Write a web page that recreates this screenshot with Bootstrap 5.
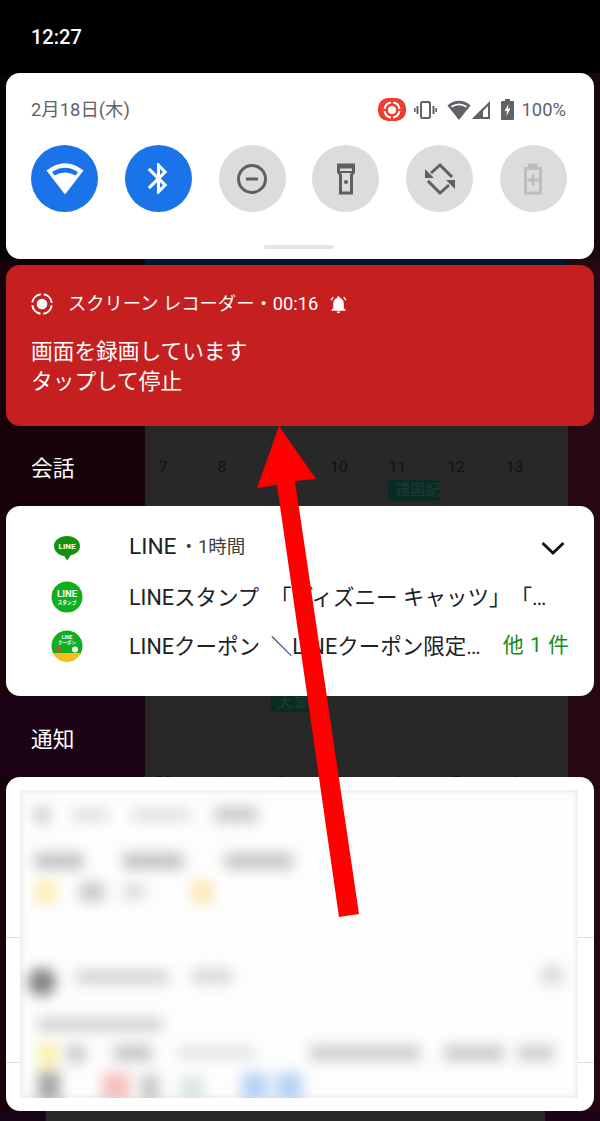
<!DOCTYPE html>
<html lang="ja">
<head>
  <meta charset="UTF-8">
  <meta name="viewport" content="width=device-width, initial-scale=1.0">
  <title>通知パネル</title>
  <link href="https://cdn.jsdelivr.net/npm/bootstrap@5.3.0/dist/css/bootstrap.min.css" rel="stylesheet">
  <style>
    html, body { height: 1121px; overflow: hidden; }
    body { background: #000; font-family: Roboto, "Noto Sans CJK JP", sans-serif; }
    .shade { position: relative; width: 600px; height: 1121px; background: #000; }
    .clock-bar { height: 73px; padding: 23px 0 0 31px; color: #fff; font-size: 20px; font-weight: 500; line-height: 28px; }
    .qs-wrap { background: linear-gradient(90deg, #080306 0 300px, #1a070c 300px); }
    .qs-panel { margin: 0 6px; height: 186px; background: #fff; border-radius: 14px; padding: 0 27px 0 25px; }
    .qs-top { height: 72px; padding-top: 2px; color: #5f6368; font-size: 18.400px; }
    .st-wrap { margin-right: 1px; }
    .rec-pill { width: 28px; height: 23px; background: #ee3e33; border-radius: 10px; margin-right: 8px; }
    .st-gap { margin-right: 10px; }
    .qs-btn { width: 67px; height: 67px; border-radius: 50%; background: #dcdcdc; }
    .qs-btn.on { background: #1a73e8; }
    .qs-handle { width: 70px; height: 4px; background: #e4e4e4; border-radius: 2px; margin: 33px auto 0; }
    .wall { background: linear-gradient(90deg, #170309 0 145px, #282828 145px 568px, #260812 568px); }
    .wall-navy { height: 6px; background: linear-gradient(90deg, #130308 0 145px, #03152a 145px 568px, #260812 568px); }
    .rec-card { margin: 0 6px; height: 161px; background: #c5201f; border-radius: 14px; color: #fff; padding: 27px 25px 0; }
    .rec-head { font-size: 18.300px; line-height: 24px; height: 24px; white-space: nowrap; }
    .rec-bell { margin-left: 10px; }
    .rec-body { font-size: 21.700px; line-height: 30px; margin-top: 21px; }
    .sect-row { height: 80px; overflow: hidden; }
    .sect-row.low { height: 81px; background: linear-gradient(90deg, #1c0316 0 145px, #282828 145px 568px, #260812 568px); }
    .sect-name { width: 103px; margin-left: 31px; color: #fff; font-size: 21.700px; line-height: 30px; padding-top: 28px; flex: none; }
    .sect-row.low .sect-name { padding-top: 29px; }
    .cal-week { width: 410px; display: grid; grid-template-columns: repeat(7, 1fr); color: #111; font-size: 15.500px; line-height: 20px; text-align: center; padding-top: 31px; align-content: start; }
    .cal-chip { grid-column: 5 / span 2; width: 52px; height: 21px; margin: 3px 0 0 20px; background: #0a2a24; color: #1d3b35; border-radius: 3px; font-size: 15px; line-height: 21px; white-space: nowrap; text-align: left; padding-left: 7px; }
    .cal-low { width: 410px; flex: none; display: flex; flex-direction: column; }
    .cal-chip-low { width: 40px; height: 16px; margin-left: 137px; background: #0a2a24; color: #1d3b35; border-radius: 0 0 3px 3px; font-size: 16px; line-height: 12px; white-space: nowrap; padding-left: 6px; }
    .cal-nums { margin-top: auto; display: grid; grid-template-columns: repeat(7, 1fr); color: #111; font-size: 15.500px; line-height: 18px; text-align: center; margin-bottom: -14px; }
    .line-card { margin: 0 6px; height: 190px; background: #fff; border-radius: 14px; color: #202124; font-size: 21.500px; padding-top: 17px; }
    .line-row { height: 49px; padding-left: 45px; padding-right: 25px; }
    .line-ico { width: 32px; flex: none; margin-right: 46px; }
    .line-name { font-size: 22.700px; }
    .line-ago { font-size: 18.500px; color: #3c4043; margin-left: 3px; }
    .line-chev { margin-right: 4px; }
    .line-msg { min-width: 0; white-space: nowrap; padding-top: 3px; }
    .line-more { color: #188a1c; font-size: 21px; flex: none; margin-left: auto; word-spacing: 1px; }
    .blur-card { margin: 0 6px; height: 334px; background: #fff; border-radius: 14px; overflow: hidden; }
    .shade-foot { height: 10px; background: linear-gradient(90deg, #170316 0 46px, #282828 46px 545px, #1c0316 545px); }
    .red-arrow { position: absolute; left: 0; top: 0; pointer-events: none; }
  </style>
</head>
<body>
  <div class="shade">
    <div class="clock-bar">12:27</div>

    <!-- クイック設定 -->
    <div class="qs-wrap">
      <div class="qs-panel">
        <div class="qs-top d-flex align-items-center justify-content-between">
          <span>2月18日(木)</span>
          <div class="st-wrap d-flex align-items-center">
            <div class="rec-pill d-flex align-items-center justify-content-center">
              <svg width="20" height="20" viewBox="0 0 20 20"><circle cx="10" cy="10" r="7.500" fill="none" stroke="#fff" stroke-width="2" stroke-dasharray="9.500 2.300" stroke-dashoffset="-1"/><circle cx="10" cy="10" r="4" fill="#fff"/></svg>
            </div>
            <svg class="st-gap" width="23" height="20" viewBox="0 0 23 20" fill="none" stroke="#5f6368"><rect x="7" y="2" width="9" height="16" rx="1.500" stroke-width="2"/><path d="M3.500 6v8M19.500 6v8" stroke-width="2"/><path d="M.8 8v4M22.200 8v4" stroke-width="1.600"/></svg>
            <svg width="24" height="20" viewBox="0 0 24 20"><path fill="#5f6368" d="M12 20 .4 5.500C3.500 2.400 7.500 .8 12 .8s8.500 1.600 11.600 4.700z"/><path fill="#fff" d="M4 6Q12 .8 20 6l-1 1.400Q12 3.200 5 7.400z"/></svg>
            <svg class="st-gap" width="20" height="20" viewBox="0 0 20 20" fill="#5f6368"><path d="M1 19 19 1v18zm11-2h5V6l-5 5z" fill-rule="evenodd"/><path d="M1 19 12 8v11z"/></svg>
            <svg class="me-2" width="13" height="21" viewBox="0 0 13 21"><path fill="#5f6368" d="M4 0h5v2h3a1 1 0 0 1 1 1v17a1 1 0 0 1-1 1H1a1 1 0 0 1-1-1V3a1 1 0 0 1 1-1h3z"/><path fill="#fff" d="M7.500 5 3.500 12h2.500l-.5 5 4-7.500H7z"/></svg>
            <span>100%</span>
          </div>
        </div>
        <div class="d-flex justify-content-between">
          <div class="qs-btn on d-flex align-items-center justify-content-center">
            <svg width="40" height="40" viewBox="0 0 40 40"><path fill="#fff" d="M1.500 11.500Q20-3 38.500 11.500L20 35.500z"/><path fill="#1a73e8" d="M7 13Q20 4.500 33 13l-2.500 3.500Q20 10.500 9.500 16.500z"/></svg>
          </div>
          <div class="qs-btn on d-flex align-items-center justify-content-center">
            <svg width="37" height="37" viewBox="0 0 24 24"><path fill="#fff" d="M17.710 7.710 12 2h-1v7.590L6.410 5 5 6.410 10.590 12 5 17.590 6.410 19 11 14.410V22h1l5.710-5.710-4.300-4.290 4.300-4.290zM13 5.830l1.880 1.880L13 9.590V5.830zm1.880 10.460L13 18.170v-3.760l1.880 1.880z"/></svg>
          </div>
          <div class="qs-btn d-flex align-items-center justify-content-center">
            <svg width="40" height="40" viewBox="0 0 40 40" fill="none" stroke="#5f5f5f" stroke-width="3"><circle cx="20" cy="20" r="13.500"/><path d="M14 20h12"/></svg>
          </div>
          <div class="qs-btn d-flex align-items-center justify-content-center">
            <svg width="40" height="40" viewBox="0 0 40 40"><path fill="none" stroke="#5f5f5f" stroke-width="3" d="M12.500 8v5l2 3v18h11V16l2-3V8z"/><path fill="#5f5f5f" d="M11 4.500h18V9H11z"/><path fill="none" stroke="#5f5f5f" stroke-width="2" d="M12 13h16"/><circle cx="20" cy="23" r="2" fill="#5f5f5f"/></svg>
          </div>
          <div class="qs-btn d-flex align-items-center justify-content-center">
            <svg width="40" height="40" viewBox="0 0 40 40"><path fill="none" stroke="#5f5f5f" stroke-width="3" d="M11 14 20 6l12 12M29 26l-9 8L8 22"/><path fill="#5f5f5f" d="M5 10v9h9zM35 30v-9h-9z"/></svg>
          </div>
          <div class="qs-btn d-flex align-items-center justify-content-center">
            <svg width="40" height="40" viewBox="0 0 40 40"><path fill="#bdbdbd" d="M15 4.500h10V8h4v27.500H11V8h4zM14 11v21.500h12V11z" fill-rule="evenodd"/><path fill="#bdbdbd" d="M18.500 15.500h3v4h4v3h-4v4h-3v-4h-4v-3h4z"/></svg>
          </div>
        </div>
        <div class="qs-handle"></div>
      </div>
    </div>
    <div class="wall-navy"></div>

    <div class="wall">
      <!-- 画面録画の通知 -->
      <div class="rec-card">
        <div class="rec-head d-flex align-items-center">
          <svg class="me-2 flex-shrink-0" width="29" height="24" viewBox="0 0 29 24"><circle cx="11" cy="12" r="9.800" fill="none" stroke="#fff" stroke-width="2" stroke-dasharray="12.500 2.900" stroke-dashoffset="-1.400"/><circle cx="11" cy="12" r="5.300" fill="#fff"/></svg>
          <span>スクリーン レコーダー・00:16</span>
          <svg class="rec-bell" width="21" height="21" viewBox="0 0 24 24"><path fill="#fff" d="M12 22c1.100 0 2-.9 2-2h-4c0 1.100.9 2 2 2zm6-6v-5c0-3.070-1.630-5.640-4.500-6.320V4c0-.83-.67-1.500-1.500-1.500s-1.500.67-1.500 1.500v.68C7.640 5.360 6 7.920 6 11v5l-2 2v1h16v-1l-2-2z"/><path fill="none" stroke="#fff" stroke-width="1.600" d="M6 3.500 3.500 7M18 3.500 20.500 7"/></svg>
        </div>
        <div class="rec-body">画面を録画しています<br>タップして停止</div>
      </div>

      <div class="sect-row d-flex">
        <div class="sect-name">会話</div>
        <div class="cal-week">
          <span>7</span><span>8</span><span>9</span><span>10</span><span>11</span><span>12</span><span>13</span>
          <div class="cal-chip">建国記</div>
        </div>
      </div>

      <!-- LINE -->
      <div class="line-card">
        <div class="line-row d-flex align-items-center">
          <div class="line-ico text-center">
            <svg width="28" height="27" viewBox="0 0 28 27"><path fill="#109410" d="M14 1C6.800 1 1 5.400 1 11s5.400 9.700 10.200 10l3 4.500 3.300-5C23.500 19 27 15.500 27 11 27 5.400 21.200 1 14 1z"/><text x="14" y="14" fill="#fff" font-family="Roboto, sans-serif" font-size="8" font-weight="700" text-anchor="middle">LINE</text></svg>
          </div>
          <span class="line-name">LINE</span>
          <span class="line-ago">・1時間</span>
          <svg class="line-chev ms-auto" width="24" height="14" viewBox="0 0 24 14"><path fill="none" stroke="#111" stroke-width="2.800" d="M1.500 2 12 12 22.500 2"/></svg>
        </div>
        <div class="line-row d-flex align-items-center">
          <div class="line-ico">
            <svg width="32" height="32" viewBox="0 0 32 32"><circle cx="16" cy="16" r="15.500" fill="#10ad1e"/><text x="16" y="16" fill="#fff" font-family="Roboto, sans-serif" font-size="9.500" font-weight="700" text-anchor="middle">LINE</text><text x="16" y="22.500" fill="#fff" font-family="'Noto Sans CJK JP', sans-serif" font-size="4.800" font-weight="700" text-anchor="middle">スタンプ</text></svg>
          </div>
          <span class="line-msg">LINEスタンプ　「ディズニー キャッツ」　「…</span>
        </div>
        <div class="line-row d-flex align-items-center">
          <div class="line-ico">
            <svg width="32" height="32" viewBox="0 0 32 32"><defs><clipPath id="couponClip"><circle cx="16" cy="16" r="15.500"/></clipPath></defs><g clip-path="url(#couponClip)"><rect width="32" height="32" fill="#10ad1e"/><rect y="23" width="32" height="9" fill="#f6be1a"/></g><text x="16" y="8.500" fill="#fff" font-family="Roboto, sans-serif" font-size="5" font-weight="700" text-anchor="middle">LINE</text><text x="16" y="14" fill="#fff" font-family="'Noto Sans CJK JP', sans-serif" font-size="4.500" font-weight="700" text-anchor="middle">クーポン</text><circle cx="8" cy="19.500" r="3" fill="#a5662c"/><circle cx="24" cy="19.500" r="3" fill="#fff"/></svg>
          </div>
          <span class="line-msg">LINEクーポン&nbsp;&nbsp;＼LINEクーポン限定…</span>
          <span class="line-more">他 1 件</span>
        </div>
      </div>

      <div class="sect-row low d-flex">
        <div class="sect-name">通知</div>
        <div class="cal-low">
          <div class="cal-chip-low">天皇</div>
          <div class="cal-nums"><span>28</span><span>1</span><span>2</span><span>3</span><span>4</span><span>5</span><span>6</span></div>
        </div>
      </div>

      <!-- ぼかし済みの通知 -->
      <div class="blur-card">
        <svg class="d-block" width="588" height="334" viewBox="0 0 588 334">
          <defs>
            <filter id="soft" x="-5%" y="-5%" width="110%" height="110%"><feGaussianBlur stdDeviation="6.500"/></filter>
            <filter id="softEdge" x="-5%" y="-5%" width="110%" height="110%"><feGaussianBlur stdDeviation="2.500"/></filter>
            <clipPath id="shotClip"><rect x="14" y="13" width="558" height="308"/></clipPath>
          </defs>
          <path d="M0 160.500h588M0 285.500h588" stroke="#dedede"/>
          <g clip-path="url(#shotClip)">
            <rect x="14" y="13" width="558" height="308" fill="#fdfdfd"/>
            <rect x="14" y="13" width="558" height="308" fill="none" stroke="#e2e2e2" stroke-width="3" filter="url(#softEdge)"/>
            <g filter="url(#soft)" opacity=".72">
              <circle cx="36" cy="38" r="9" fill="#bbb"/>
              <rect x="66" y="33" width="36" height="10" fill="#ccc"/>
              <rect x="126" y="33" width="58" height="10" fill="#ccc"/>
              <rect x="209" y="30" width="42" height="15" fill="#b4b4b4"/>
              <rect x="29" y="76" width="48" height="16" fill="#aaa"/>
              <rect x="117" y="76" width="60" height="16" fill="#aaa"/>
              <rect x="219" y="76" width="68" height="16" fill="#b0b0b0"/>
              <rect x="30" y="104" width="20" height="22" fill="#fbe78e"/>
              <rect x="74" y="106" width="24" height="18" fill="#b0b0b0"/>
              <rect x="118" y="108" width="20" height="14" fill="#c8c8c8"/>
              <rect x="186" y="104" width="20" height="22" fill="#fbdf90"/>
              <circle cx="36" cy="205" r="14" fill="#555"/>
              <rect x="70" y="194" width="92" height="12" fill="#bbb"/>
              <rect x="186" y="193" width="40" height="13" fill="#c4c4c4"/>
              <rect x="536" y="190" width="20" height="16" fill="#c4c4c4"/>
              <rect x="32" y="241" width="124" height="13" fill="#bdbdbd"/>
              <rect x="32" y="266" width="20" height="24" fill="#f6ec90"/>
              <rect x="60" y="268" width="20" height="18" fill="#b8b8b8"/>
              <rect x="108" y="268" width="38" height="16" fill="#b0b0b0"/>
              <rect x="172" y="270" width="76" height="12" fill="#d8d8d8"/>
              <rect x="304" y="268" width="110" height="16" fill="#bcbcbc"/>
              <rect x="438" y="268" width="60" height="16" fill="#b8b8b8"/>
              <rect x="512" y="268" width="36" height="16" fill="#bcbcbc"/>
              <rect x="32" y="294" width="22" height="30" fill="#858585"/>
              <rect x="96" y="296" width="28" height="28" fill="#f2a8a8"/>
              <rect x="135" y="298" width="18" height="26" fill="#b0b0b0"/>
              <rect x="174" y="300" width="24" height="24" fill="#cfdcdc"/>
              <rect x="236" y="296" width="26" height="28" fill="#9cc0f0"/>
              <rect x="270" y="296" width="26" height="28" fill="#9cc0f0"/>
            </g>
          </g>
        </svg>
      </div>
      <div class="shade-foot"></div>
    </div>

    <!-- 赤い矢印 -->
    <svg class="red-arrow" width="600" height="1121" viewBox="0 0 600 1121"><polygon fill="#fe0000" points="279,426 316,479 295,481 359,914 339,917 277,485 257,488"/></svg>
  </div>

  <script src="https://cdn.jsdelivr.net/npm/bootstrap@5.3.0/dist/js/bootstrap.bundle.min.js"></script>
</body>
</html>
